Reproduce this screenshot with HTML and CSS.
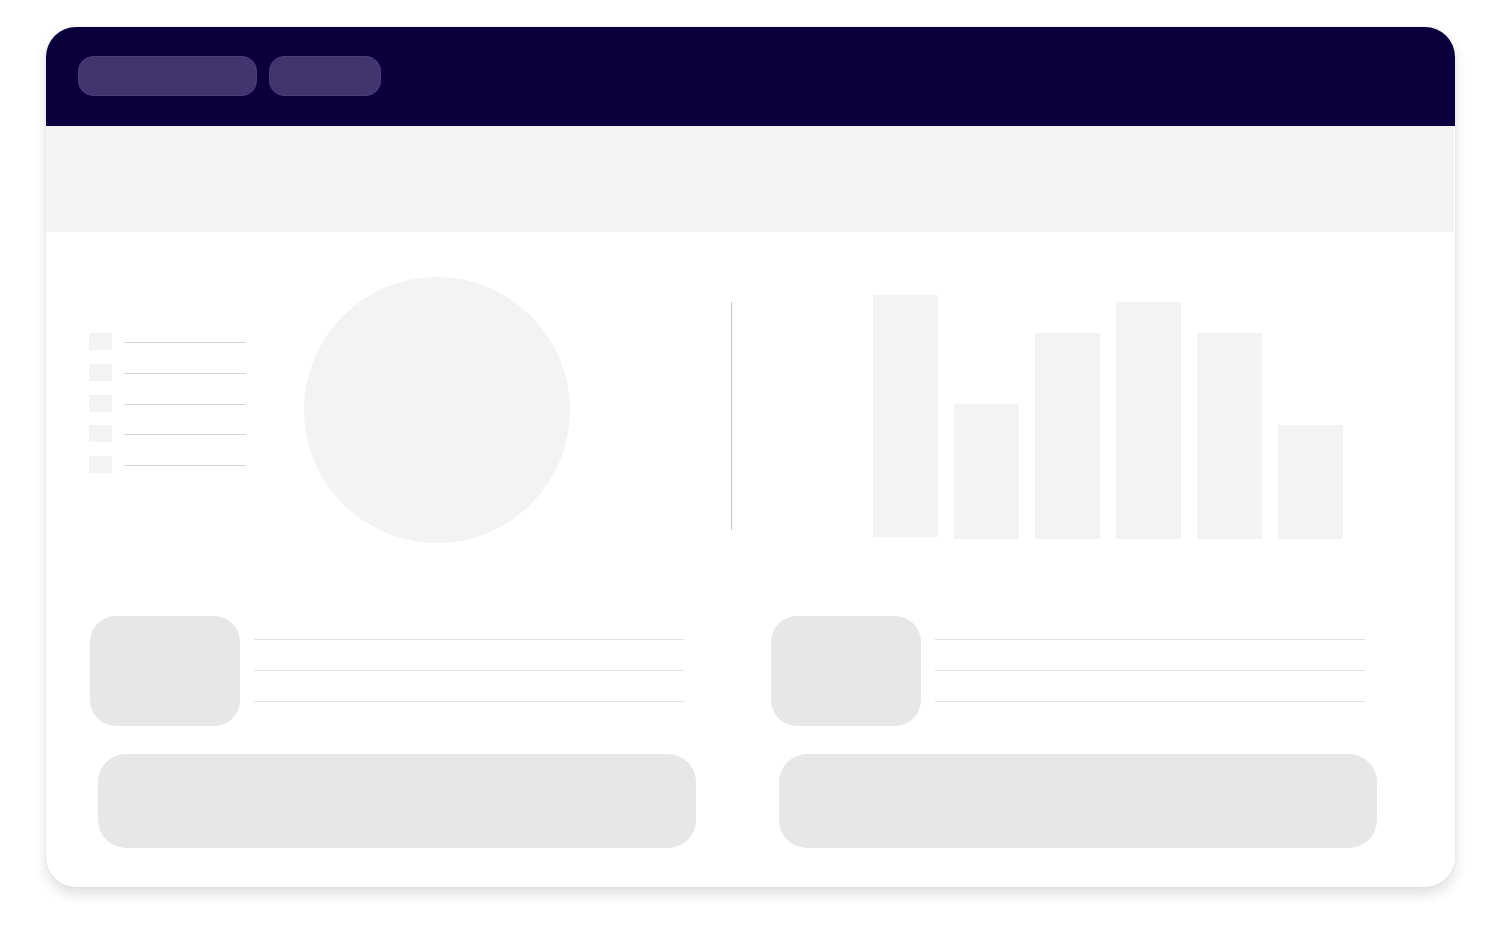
FILE: index.html
```html
<!DOCTYPE html>
<html lang="en">
<head>
<meta charset="utf-8">
<title>Dashboard skeleton</title>
<link rel="stylesheet" href="styles.css">
</head>
<body>
<div class="card">
  <header class="topbar">
    <span class="pill pill-wide"></span>
    <span class="pill pill-narrow"></span>
  </header>
  <div class="band"></div>
  <section class="charts">
    <ul class="legend">
      <li class="legend-item"><span class="swatch"></span><span class="legend-line"></span></li>
      <li class="legend-item"><span class="swatch"></span><span class="legend-line"></span></li>
      <li class="legend-item"><span class="swatch"></span><span class="legend-line"></span></li>
      <li class="legend-item"><span class="swatch"></span><span class="legend-line"></span></li>
      <li class="legend-item"><span class="swatch"></span><span class="legend-line"></span></li>
    </ul>
    <div class="pie"></div>
    <div class="divider"></div>
    <div class="bars">
      <div class="bar bar-first" style="height:242px"></div>
      <div class="bar" style="height:135px"></div>
      <div class="bar" style="height:206px"></div>
      <div class="bar" style="height:237px"></div>
      <div class="bar" style="height:206px"></div>
      <div class="bar" style="height:114px"></div>
    </div>
  </section>
  <section class="details">
    <div class="detail">
      <div class="detail-row">
        <div class="avatar"></div>
        <div class="lines">
          <span class="line"></span>
          <span class="line"></span>
          <span class="line"></span>
        </div>
      </div>
      <div class="button"></div>
    </div>
    <div class="detail">
      <div class="detail-row">
        <div class="avatar"></div>
        <div class="lines">
          <span class="line"></span>
          <span class="line"></span>
          <span class="line"></span>
        </div>
      </div>
      <div class="button"></div>
    </div>
  </section>
</div>
</body>
</html>
```

FILE: styles.css
```css
* { box-sizing: border-box; }

html, body {
  margin: 0;
  padding: 0;
  background: #ffffff;
  font-family: "Liberation Sans", Arial, sans-serif;
}

body {
  width: 1500px;
  height: 946px;
  overflow: hidden;
}

.card {
  margin: 27px 0 0 46px;
  width: 1409px;
  height: 860px;
  background: #ffffff;
  border-radius: 30px;
  overflow: hidden;
  box-shadow: 0 7px 14px rgba(0, 0, 0, 0.13), 0 0 3px rgba(0, 0, 0, 0.06);
}

.topbar {
  height: 99px;
  background: #0b003d;
  display: flex;
  align-items: flex-start;
  gap: 12px;
  padding: 29px 0 0 32px;
}

.pill {
  display: block;
  height: 40px;
  background: #41356f;
  border: 1px solid #4a3e7a;
  border-radius: 15px;
}

.pill-wide { width: 179px; }
.pill-narrow { width: 112px; }

.band {
  height: 106px;
  margin-right: 1px;
  background: #f3f3f3;
}

.charts {
  display: flex;
  align-items: flex-start;
  height: 266px;
  margin-top: 45px;
  padding-left: 43px;
}

.legend {
  list-style: none;
  margin: 56px 0 0 0;
  padding: 0;
  width: 157px;
  display: flex;
  flex-direction: column;
  gap: 13.75px;
}

.legend-item {
  display: flex;
  align-items: flex-start;
  height: 17px;
}

.swatch {
  display: block;
  width: 23px;
  height: 17px;
  background: #f3f3f3;
}

.legend-line {
  display: block;
  margin: 9px 0 0 12px;
  width: 122px;
  height: 1px;
  background: #d4d4d4;
}

.pie {
  margin-left: 58px;
  width: 266px;
  height: 266px;
  border-radius: 50%;
  background: #f3f3f3;
}

.divider {
  margin: 25px 0 0 161px;
  width: 1px;
  height: 228px;
  background: #c4c4c4;
}

.bars {
  margin: 18px 0 0 141px;
  height: 244px;
  display: flex;
  align-items: flex-end;
  gap: 16px;
}

.bar {
  width: 65px;
  background: #f3f3f3;
}

.bar-first { margin-bottom: 2px; }

.details {
  display: grid;
  grid-template-columns: 681px 681px;
  padding-left: 44px;
  margin-top: 73px;
}

.detail-row {
  display: flex;
  align-items: flex-start;
  gap: 14px;
}

.avatar {
  width: 150px;
  height: 110px;
  border-radius: 26px;
  background: #e7e7e7;
}

.lines {
  width: 430px;
  padding-top: 23px;
  display: flex;
  flex-direction: column;
  gap: 30px;
}

.line {
  display: block;
  height: 1px;
  background: #e2e2e2;
}

.button {
  margin: 28px 0 0 8px;
  width: 598px;
  height: 94px;
  border-radius: 28px;
  background: #e7e7e7;
}
```
